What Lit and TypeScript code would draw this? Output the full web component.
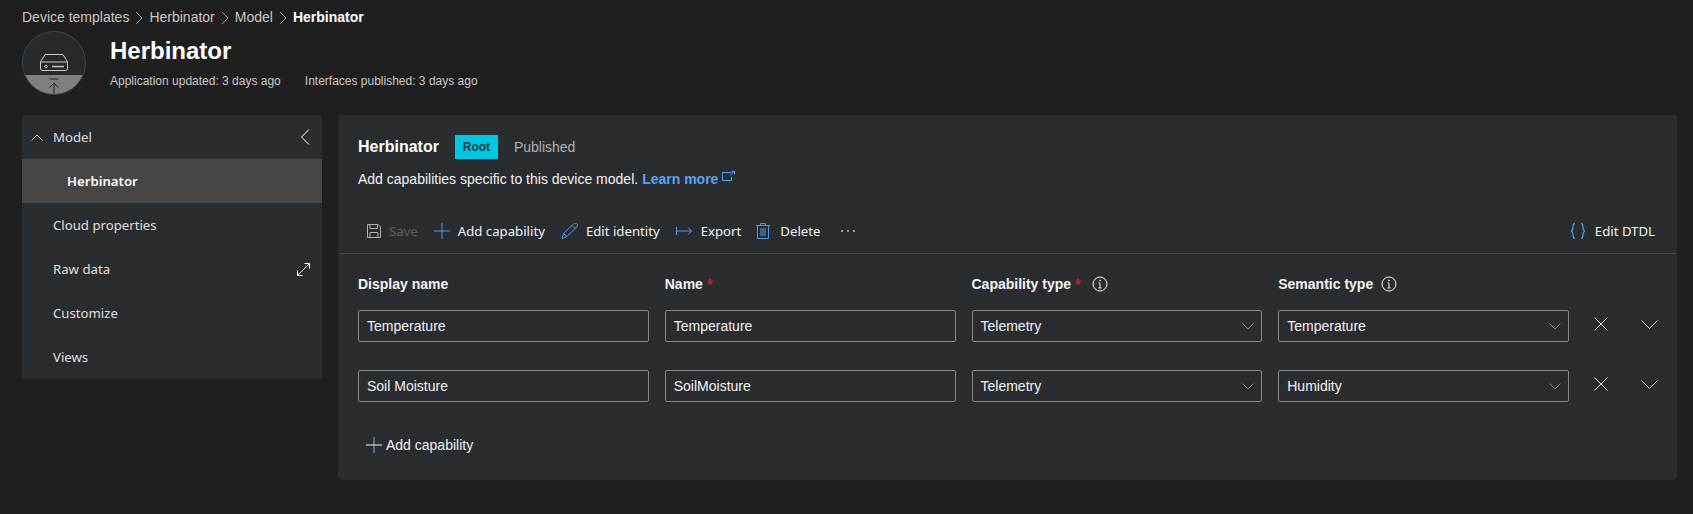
import { LitElement, html, css, svg } from "lit";
import { customElement } from "lit/decorators.js";

const icon = (w: number, h: number, body: unknown, cls = "") =>
  html`<svg class=${cls} width=${w} height=${h} viewBox="0 0 ${w} ${h}" fill="none" stroke="currentColor" stroke-width="1">${body}</svg>`;

const chevR = icon(8, 14, svg`<path d="M1 1l6 6-6 6"/>`, "sep");
const chevDownSm = icon(12, 7, svg`<path d="M.5.5L6 6l5.500-5.500"/>`);
const chevDownLg = icon(17, 9, svg`<path d="M.5.5L8.500 8.500l8-8"/>`);
const xIcon = icon(14, 14, svg`<path d="M.5.5l13 13M13.500.5l-13 13"/>`);
const info = icon(16, 16, svg`<circle cx="8" cy="8" r="7"/><path d="M8 7v5M6.600 7H8M6.400 12h3.200"/><circle cx="8" cy="4.600" r=".8" fill="currentColor" stroke="none"/>`);

@customElement("app-root")
export class AppRoot extends LitElement {
  static styles = css`
    :host { display: block; min-height: 514px; background: #201f1f; color: #fff; font-family: "Liberation Sans", Arial, sans-serif; font-size: 14px; overflow: hidden; }
    svg { display: block; flex: none; }
    .crumbs { display: flex; align-items: center; height: 17px; padding: 9px 0 0 22px; color: #c8c6c4; line-height: 17px; }
    .crumbs .sep { margin: 0 6px; color: #a19f9d; }
    .crumbs b { color: #fff; }
    .head { display: flex; padding: 5px 0 0 22px; height: 89px; box-sizing: border-box; }
    .avatar { width: 64px; height: 64px; flex: none; }
    .titles { margin-left: 24px; }
    h1 { margin: 4px 0 0; font-size: 24px; line-height: 32px; font-weight: 700; }
    .meta { display: flex; gap: 24px; margin-top: 6px; font-size: 12px; line-height: 16px; color: #c8c6c4; }
    .body { display: flex; gap: 16px; padding: 0 16px 0 22px; }
    .nav { width: 300px; flex: none; background: #2a2d30; border-radius: 4px; font-family: "Noto Sans", sans-serif; font-size: 13.200px; color: #e1dfdd; height: 264px; overflow: hidden; }
    .nav-row { display: flex; align-items: center; height: 44px; padding: 0 12px 0 31px; }
    .nav-row span { flex: 1; }
    .nav-row svg { color: #fff; }
    .nav-row.top { padding-left: 9px; }
    .nav-row.top .up { margin-right: 10px; color: #c8c6c4; }
    .nav-row.sel { background: #484644; font-weight: 600; color: #fff; padding-left: 45px; }
    .panel { flex: 1; min-width: 0; height: 365px; background: #2a2d30; border-radius: 4px; }
    .intro { padding: 20px 20px 0; }
    .tline { display: flex; align-items: center; height: 24px; }
    .tline strong { font-size: 16px; }
    .badge { margin-left: 16px; width: 43px; height: 24px; background: #00c7e6; color: #143c40; font-size: 12px; font-weight: 700; display: flex; align-items: center; justify-content: center; }
    .pub { margin-left: 16px; color: #b3b0ad; }
    .desc { display: flex; align-items: center; margin-top: 10px; height: 20px; color: #f3f2f1; }
    .desc a { color: #5aa2f0; font-weight: 700; margin-left: 4px; }
    .desc svg { margin: -6px 0 0 4px; color: #5aa2f0; }
    .toolbar { display: flex; align-items: center; height: 44px; margin-top: 20px; padding: 0 22px 0 29px; border-bottom: 1px solid #414345; font-family: "Noto Sans", sans-serif; font-size: 13.200px; color: #f3f2f1; }
    .tool { display: flex; align-items: center; gap: 8px; margin-right: 16px; color: #f3f2f1; }
    .tool svg { color: #5599e6; }
    .tool.off { color: #605e5c; margin-right: 16px; }
    .tool.off svg { color: #b3b0ad; }
    .tool.ex { gap: 9px; margin-right: 15px; }
    .tool.del { gap: 10px; margin-right: 20px; }
    .dots { color: #c8c6c4; }
    .spacer { flex: 1; }
    .tool.end { margin-right: 0; gap: 10px; }
    .grid { display: grid; grid-template-columns: repeat(4, 1fr) 80px; column-gap: 16px; padding: 0 12px 0 20px; }
    .lab { display: flex; align-items: center; height: 20px; margin: 20px 0 16px; font-weight: 700; color: #f3f2f1; }
    .lab i { color: #e81123; font-style: normal; margin-left: 4px; }
    .lab svg { margin-left: 8px; }
    .lab i + svg { margin-left: 11px; }
    .field { box-sizing: border-box; height: 32px; margin-bottom: 28px; border: 1px solid #8a8886; border-radius: 2px; display: flex; align-items: center; padding: 0 7px 0 8px; color: #f3f2f1; }
    .field span { flex: 1; }
    .field svg { color: #8a8886; }
    .acts { display: flex; gap: 16px; height: 32px; align-items: center; color: #e1dfdd; margin-top: -2px; }
    .acts div { width: 32px; display: flex; justify-content: center; }
    .add { display: flex; align-items: center; gap: 4px; margin: 5px 0 0 28px; height: 20px; color: #f3f2f1; }
    .add .v { stroke: #7fb2e6; }
  `;

  private field(t: string, chev = false) {
    return html`<div class="field"><span>${t}</span>${chev ? chevDownSm : ""}</div>`;
  }

  private row(a: string, b: string, c: string, d: string) {
    return html`${this.field(a)}${this.field(b)}${this.field(c, true)}${this.field(d, true)}
      <div class="acts"><div>${xIcon}</div><div>${chevDownLg}</div></div>`;
  }

  render() {
    return html`
      <div class="crumbs">Device templates${chevR}Herbinator${chevR}Model${chevR}<b>Herbinator</b></div>
      <div class="head">
        <svg class="avatar" viewBox="0 0 64 64">
          <defs><clipPath id="c"><circle cx="32" cy="32" r="31.500"/></clipPath></defs>
          <g clip-path="url(#c)">
            <rect width="64" height="64" fill="#262a2d"/>
            <rect y="44" width="64" height="20" fill="#7f7f7f"/>
            <path d="M23 23.500h18l4.500 7.500v6.500a2 2 0 0 1-2 2h-23a2 2 0 0 1-2-2V31zM18.500 31h27" fill="none" stroke="#c8c8c8" stroke-width="1"/>
            <circle cx="24" cy="35.500" r="1.300" fill="none" stroke="#c8c8c8"/>
            <path d="M30 35.500h12" stroke="#c8c8c8" stroke-width="1.400"/>
            <path d="M27.500 48h9M32 63V52M27.500 56.500L32 52l4.500 4.500" fill="none" stroke="#262626" stroke-width="1"/>
          </g>
          <circle cx="32" cy="32" r="31.500" fill="none" stroke="#444"/>
        </svg>
        <div class="titles">
          <h1>Herbinator</h1>
          <div class="meta"><span>Application updated: 3 days ago</span><span>Interfaces published: 3 days ago</span></div>
        </div>
      </div>
      <div class="body">
        <nav class="nav">
          <div class="nav-row top">
            ${icon(12, 7, svg`<path d="M.5 6.500L6 1l5.500 5.500"/>`, "up")}<span>Model</span>
            ${icon(10, 16, svg`<path d="M9 .5L1.500 8 9 15.500"/>`)}
          </div>
          <div class="nav-row sel"><span>Herbinator</span></div>
          <div class="nav-row"><span>Cloud properties</span></div>
          <div class="nav-row"><span>Raw data</span>
            ${icon(13, 13, svg`<path d="M12.500.5L.5 12.500M7.500.5h5v5M.5 7.500v5h5"/>`)}
          </div>
          <div class="nav-row"><span>Customize</span></div>
          <div class="nav-row"><span>Views</span></div>
        </nav>
        <main class="panel">
          <div class="intro">
            <div class="tline"><strong>Herbinator</strong><div class="badge">Root</div><span class="pub">Published</span></div>
            <div class="desc">Add capabilities specific to this device model.<a>Learn more</a>
              ${icon(13, 10, svg`<path d="M9 1.500H.5v8h9V6M8 4.500L12 .5M9.500.5h3v3"/>`)}
            </div>
          </div>
          <div class="toolbar">
            <div class="tool off">${icon(14, 14, svg`<path d="M.5.5h10.500l2.500 2.500v10.500H.5zM3 .5v4h7.500v-4M3 13.500v-5h8v5"/>`)}Save</div>
            <div class="tool">${icon(16, 16, svg`<path d="M8 0v16M0 8h16"/>`)}Add capability</div>
            <div class="tool">${icon(17, 16, svg`<path d="M1 15.500l1.500-5L12.500 1a2 2 0 0 1 3.500 2.500L6 13.500zM2.500 10.500L6 13.500M11 2.500l3.500 3.500"/>`)}Edit identity</div>
            <div class="tool ex">${icon(16, 8, svg`<path d="M.5 0v8M.5 4h15M12 .5L15.500 4 12 7.500"/>`)}Export</div>
            <div class="tool del">${icon(14, 16, svg`<path d="M0 2.500h14M4.500 2.500v-2h5v2M1.500 2.500v13h11v-13M5 5v8M7 5v8M9 5v8"/>`)}Delete</div>
            <div class="dots">${icon(16, 4, svg`<g fill="currentColor" stroke="none"><circle cx="2" cy="2" r="1"/><circle cx="8" cy="2" r="1"/><circle cx="14" cy="2" r="1"/></g>`)}</div>
            <div class="spacer"></div>
            <div class="tool end">${icon(14, 16, svg`<path stroke-width="1.200" d="M4 .5C2 .5 2 2 2 4s0 3.500-2 4c2 .5 2 2 2 4s0 3.500 2 3.500M10 .5c2 0 2 1.500 2 3.500s0 3.500 2 4c-2 .5-2 2-2 4s0 3.500-2 3.500"/>`)}Edit DTDL</div>
          </div>
          <div class="grid">
            <div class="lab">Display name</div>
            <div class="lab">Name<i>*</i></div>
            <div class="lab">Capability type<i>*</i>${info}</div>
            <div class="lab">Semantic type${info}</div>
            <div></div>
            ${this.row("Temperature", "Temperature", "Telemetry", "Temperature")}
            ${this.row("Soil Moisture", "SoilMoisture", "Telemetry", "Humidity")}
          </div>
          <div class="add">${icon(16, 16, svg`<path class="v" d="M8 0v16"/><path d="M0 8h16"/>`)}Add capability</div>
        </main>
      </div>
    `;
  }
}
